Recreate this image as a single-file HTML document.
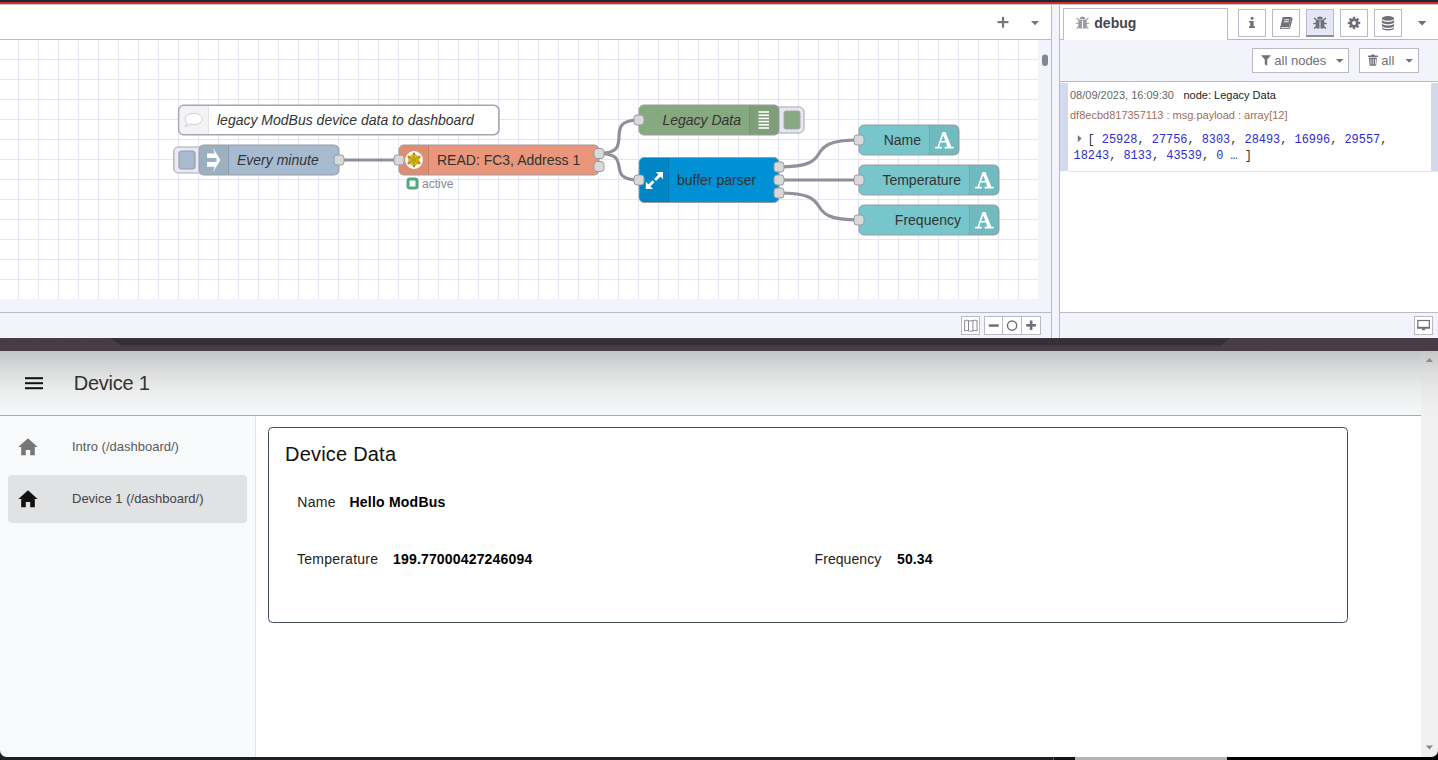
<!DOCTYPE html>
<html><head><meta charset="utf-8">
<style>
*{margin:0;padding:0;box-sizing:border-box}
html,body{width:1438px;height:760px;overflow:hidden;background:#fff;font-family:"Liberation Sans",sans-serif}
.abs{position:absolute}
#hdr1{left:0;top:0;width:1438px;height:2px;background:#1d2636}
#hdr2{left:0;top:2px;width:1438px;height:2px;background:#d42a2a}
#wstabs{left:0;top:4px;width:1051px;height:36px;background:#fff;border-bottom:1px solid #bab9c8}
#chart{left:0;top:40px;width:1051px;height:272px;background:#f3f3fb}
#grid{left:0;top:40px;width:1038px;height:259px;background-color:#fff;
  background-image:linear-gradient(to right,#e5e5f4 1px,transparent 1px),linear-gradient(to bottom,#e5e5f4 1px,transparent 1px);
  background-size:20px 20px;background-position:18px 19px}
#wsborder{left:1051px;top:4px;width:1px;height:334px;background:#bab9c8}
#sep{left:1052px;top:4px;width:7px;height:334px;background:#f3f3fb}
#sbborder{left:1059px;top:4px;width:1px;height:334px;background:#bab9c8}
#wsfoot{left:0;top:312px;width:1051px;height:26px;background:#f3f3fb;border-top:1px solid #bab9c8}
#sidebar{left:1060px;top:4px;width:378px;height:334px;background:#fff}
#sbtabs{left:1060px;top:4px;width:378px;height:36px;background:#fff;border-bottom:1px solid #bab9c8}
#sbtoolbar{left:1060px;top:40px;width:378px;height:42px;background:#f3f3fb;border-bottom:1px solid #bab9c8}
#sbfoot{left:1060px;top:312px;width:378px;height:26px;background:#f3f3fb;border-top:1px solid #bab9c8}
#band{left:0;top:338px;width:1438px;height:13px;background:#483c47}
#dash{left:0;top:351px;width:1438px;height:406px;background:#fff}
#dhead{left:0;top:351px;width:1421px;height:65px;background:linear-gradient(to bottom,#c3c4c6,#dadbdc 30%,#ebecec 60%,#f6f7f8);border-bottom:1px solid #a9a9ab}
#nav{left:0;top:416px;width:256px;height:341px;background:#f8f9fb;border-right:1px solid #e3e3e5}
#dscroll{left:1421px;top:351px;width:17px;height:406px;background:linear-gradient(to bottom,#c6c7c8 0px,#dcdcdd 20px,#e9e9ea 40px,#f0f0f0 62px,#f0f0f0)}
#bottom{left:0;top:757px;width:1438px;height:3px;background:#111}
</style></head><body>
<div class="abs" id="hdr1"></div>
<div class="abs" id="hdr2"></div>
<div class="abs" id="wstabs"></div>
<div class="abs" id="chart"></div>
<div class="abs" id="grid"></div>
<div class="abs" id="wsfoot"></div>
<svg class="abs" style="left:0;top:0" width="1051" height="312" viewBox="0 0 1051 312">
<defs><clipPath id="cc"><rect x="0" y="40" width="1038" height="259"/></clipPath></defs>
<g clip-path="url(#cc)" font-family="Liberation Sans" font-size="14">
<!-- links -->
<g fill="none" stroke="#90909a" stroke-width="3.2">
<path d="M339 160 L399 160"/>
<path d="M599 153.5 C638 153.5 600 120 639 120"/>
<path d="M599 153.5 C635 153.5 603 180 639 180"/>
<path d="M779 167 C842 167 796 140 859 140"/>
<path d="M779 180 L859 180"/>
<path d="M779 193 C842 193 796 220 859 220"/>
</g>
<!-- comment -->
<rect x="178.5" y="105.5" width="320" height="29" rx="5" fill="#fff" stroke="#b4b4bd"/>
<path d="M179 110.5 a5 5 0 0 1 5 -5 h24 v29 h-24 a5 5 0 0 1 -5 -5z" fill="#f3f3f5"/>
<line x1="208.5" y1="106" x2="208.5" y2="134" stroke="#e2e2e6"/>
<rect x="178.6" y="105.3" width="320.4" height="29.4" rx="5" fill="none" stroke="#a6a6b0" stroke-width="1.4"/>
<path d="M193.8 113.3 c-4.8 0 -8.6 2.5 -8.6 5.6 c0 1.4 0.8 2.7 2.2 3.7 l-2.2 3.9 l5.2 -2.6 c1.1 0.4 2.2 0.6 3.4 0.6 c4.8 0 8.6 -2.5 8.6 -5.6 s-3.8 -5.6 -8.6 -5.6z" fill="#fff" stroke="#c9c9cc" stroke-width="0.9"/>
<text x="217" y="124.9" font-style="italic" fill="#333">legacy ModBus device data to dashboard</text>

<!-- inject -->
<rect x="173.8" y="147" width="32" height="26" rx="4.5" fill="#e9e9f7" stroke="#a8a8b2" stroke-width="1.2"/>
<rect x="179" y="151" width="16" height="18" rx="3" fill="#a6bbcf" stroke="#9d9da7" stroke-width="1.2"/>
<rect x="199" y="145" width="140" height="30" rx="5" fill="#a6bbcf" stroke="#9a9aa3"/>
<path d="M204 145.5 h25 v29 h-25 a5 5 0 0 1 -4.5 -4.5 v-20 a5 5 0 0 1 4.5 -4.5z" fill="rgba(0,0,0,0.06)"/>
<line x1="228.5" y1="145.5" x2="228.5" y2="174.5" stroke="rgba(0,0,0,0.1)"/>
<path d="M207 153.4 h9 v4.5 h-9z M207 162.1 h9 v4.7 h-9z M213 147.8 L220.4 160 L213 172.2 L216.8 160z" fill="#fff"/>
<path d="M213 153 v-2" stroke="none"/>
<text x="237" y="164.9" font-style="italic" fill="#333">Every minute</text>
<rect x="334" y="155" width="10" height="10" rx="3" fill="#d9d9d9" stroke="#9a9aa3"/>

<!-- modbus read -->
<rect x="399" y="145" width="200" height="30" rx="5" fill="#e9967a" stroke="#9a9aa3"/>
<path d="M404 145.5 h25 v29 h-25 a5 5 0 0 1 -4.5 -4.5 v-20 a5 5 0 0 1 4.5 -4.5z" fill="rgba(0,0,0,0.05)"/>
<line x1="428.5" y1="145.5" x2="428.5" y2="174.5" stroke="rgba(0,0,0,0.1)"/>
<circle cx="414" cy="160" r="8.9" fill="#fff"/>
<polygon points="414.00,152.80 416.80,155.15 420.24,156.40 419.60,160.00 420.24,163.60 416.80,164.85 414.00,167.20 411.20,164.85 407.76,163.60 408.40,160.00 407.76,156.40 411.20,155.15" fill="#f3b10a"/>
<g stroke="#9ba524" stroke-width="1.3"><line x1="414.00" y1="153.70" x2="414.00" y2="166.30"/><line x1="419.46" y1="156.85" x2="408.54" y2="163.15"/><line x1="419.46" y1="163.15" x2="408.54" y2="156.85"/></g>
<g fill="#8f8a3a"><circle cx="414.00" cy="153.70" r="1.1"/><circle cx="419.46" cy="156.85" r="1.1"/><circle cx="419.46" cy="163.15" r="1.1"/><circle cx="414.00" cy="166.30" r="1.1"/><circle cx="408.54" cy="163.15" r="1.1"/><circle cx="408.54" cy="156.85" r="1.1"/></g>
<text x="437" y="164.9" fill="#333">READ: FC3, Address 1</text>
<rect x="394" y="155" width="10" height="10" rx="3" fill="#d9d9d9" stroke="#9a9aa3"/>
<rect x="594" y="148.5" width="10" height="10" rx="3" fill="#d9d9d9" stroke="#9a9aa3"/>
<rect x="594" y="161.5" width="10" height="10" rx="3" fill="#d9d9d9" stroke="#9a9aa3"/>
<rect x="408" y="179" width="9" height="9" rx="2" fill="#fff" stroke="#5aa47e" stroke-width="3"/>
<text x="422" y="188" font-size="12" fill="#8a8a90">active</text>

<!-- debug -->
<rect x="772" y="107" width="32" height="26" rx="5" fill="#e8e8f4" stroke="#a3a3ad"/>
<rect x="784" y="111" width="16" height="18" rx="2" fill="#87a980" stroke="#a3a3ad"/>
<rect x="639" y="105" width="140" height="30" rx="5" fill="#87a980" stroke="#9a9aa3"/>
<path d="M749.5 105.5 h25 a5 5 0 0 1 4.5 4.5 v20 a5 5 0 0 1 -4.5 4.5 h-25z" fill="rgba(0,0,0,0.06)"/>
<line x1="749.5" y1="105.5" x2="749.5" y2="134.5" stroke="rgba(0,0,0,0.1)"/>
<g stroke="#fff" stroke-width="1.6">
<line x1="758.5" y1="112" x2="769" y2="112"/>
<line x1="758.5" y1="115.2" x2="769" y2="115.2"/>
<line x1="758.5" y1="118.4" x2="769" y2="118.4"/>
<line x1="758.5" y1="121.6" x2="769" y2="121.6"/>
<line x1="758.5" y1="124.8" x2="769" y2="124.8"/>
<line x1="758.5" y1="128" x2="769" y2="128"/>
</g>
<text x="741" y="124.9" text-anchor="end" font-style="italic" fill="#333">Legacy Data</text>
<rect x="634" y="115" width="10" height="10" rx="3" fill="#d9d9d9" stroke="#9a9aa3"/>

<!-- buffer parser -->
<rect x="639" y="157.5" width="140" height="45" rx="5" fill="#0090d4" stroke="#9a9aa3"/>
<path d="M644 158 h25 v44 h-25 a5 5 0 0 1 -4.5 -4.5 v-35 a5 5 0 0 1 4.5 -4.5z" fill="rgba(0,0,0,0.07)"/>
<line x1="668.5" y1="158" x2="668.5" y2="202" stroke="rgba(0,0,0,0.12)"/>
<g fill="#fff">
<path d="M655.8 172 L663 172 L663 179.2z M645.8 181.8 L645.8 189 L653 189z"/></g><g stroke="#fff" stroke-width="2.9"><line x1="660.8" y1="174.2" x2="655" y2="180"/><line x1="648" y1="186.8" x2="653.5" y2="181.3"/>
</g>
<text x="677" y="184.9" fill="#333">buffer parser</text>
<rect x="634" y="175" width="10" height="10" rx="3" fill="#d9d9d9" stroke="#9a9aa3"/>
<rect x="774" y="162" width="10" height="10" rx="3" fill="#d9d9d9" stroke="#9a9aa3"/>
<rect x="774" y="175" width="10" height="10" rx="3" fill="#d9d9d9" stroke="#9a9aa3"/>
<rect x="774" y="188" width="10" height="10" rx="3" fill="#d9d9d9" stroke="#9a9aa3"/>

<!-- ui text nodes -->
<rect x="859" y="125" width="100" height="30" rx="5" fill="#77c6cc" stroke="#9a9aa3"/>
<path d="M929.5 125.5 h25 a5 5 0 0 1 4.5 4.5 v20 a5 5 0 0 1 -4.5 4.5 h-25z" fill="rgba(0,0,0,0.06)"/>
<line x1="929.5" y1="125.5" x2="929.5" y2="154.5" stroke="rgba(0,0,0,0.1)"/>
<path fill="#fff" fill-rule="evenodd" d="M942.5 131.9 L945.5 131.9 L951.3 146.8 L953.6 146.8 L953.6 148.5 L944.6 148.5 L944.6 146.8 L947.3 146.8 L945.9 142.6 L940.5 142.6 L939.2 146.8 L941.8 146.8 L941.8 148.5 L935.2 148.5 L935.2 146.8 L937.5 146.8z M943.3 135.6 L945.4 141.1 L941.1 141.1z"/>
<text x="921" y="144.9" text-anchor="end" fill="#333">Name</text>
<rect x="854" y="135" width="10" height="10" rx="3" fill="#d9d9d9" stroke="#9a9aa3"/>

<rect x="859" y="165" width="140" height="30" rx="5" fill="#77c6cc" stroke="#9a9aa3"/>
<path d="M969.5 165.5 h25 a5 5 0 0 1 4.5 4.5 v20 a5 5 0 0 1 -4.5 4.5 h-25z" fill="rgba(0,0,0,0.06)"/>
<line x1="969.5" y1="165.5" x2="969.5" y2="194.5" stroke="rgba(0,0,0,0.1)"/>
<path fill="#fff" fill-rule="evenodd" d="M982.5 171.9 L985.5 171.9 L991.3 186.8 L993.6 186.8 L993.6 188.5 L984.6 188.5 L984.6 186.8 L987.3 186.8 L985.9 182.6 L980.5 182.6 L979.2 186.8 L981.8 186.8 L981.8 188.5 L975.2 188.5 L975.2 186.8 L977.5 186.8z M983.3 175.6 L985.4 181.1 L981.1 181.1z"/>
<text x="961" y="184.9" text-anchor="end" fill="#333">Temperature</text>
<rect x="854" y="175" width="10" height="10" rx="3" fill="#d9d9d9" stroke="#9a9aa3"/>

<rect x="859" y="205" width="140" height="30" rx="5" fill="#77c6cc" stroke="#9a9aa3"/>
<path d="M969.5 205.5 h25 a5 5 0 0 1 4.5 4.5 v20 a5 5 0 0 1 -4.5 4.5 h-25z" fill="rgba(0,0,0,0.06)"/>
<line x1="969.5" y1="205.5" x2="969.5" y2="234.5" stroke="rgba(0,0,0,0.1)"/>
<path fill="#fff" fill-rule="evenodd" d="M982.5 211.9 L985.5 211.9 L991.3 226.8 L993.6 226.8 L993.6 228.5 L984.6 228.5 L984.6 226.8 L987.3 226.8 L985.9 222.6 L980.5 222.6 L979.2 226.8 L981.8 226.8 L981.8 228.5 L975.2 228.5 L975.2 226.8 L977.5 226.8z M983.3 215.6 L985.4 221.1 L981.1 221.1z"/>
<text x="961" y="224.9" text-anchor="end" fill="#333">Frequency</text>
<rect x="854" y="215" width="10" height="10" rx="3" fill="#d9d9d9" stroke="#9a9aa3"/>
</g>
<!-- vertical scrollbar thumb -->
<rect x="1042" y="54.5" width="6" height="11.5" rx="3" fill="#85858f"/>
<!-- toolbar + and caret -->
<g fill="#777780">
<rect x="997.5" y="21" width="11" height="2.2"/>
<rect x="1001.9" y="16.8" width="2.2" height="11"/>
<path d="M1031 21 h8 l-4 4.3z"/>
</g>

</svg>

<svg class="abs" style="left:940px;top:312px" width="111" height="26" viewBox="940 312 111 26">
<g fill="#fff" stroke="#bab9c8">
<rect x="961.5" y="316.5" width="18" height="18"/>
<rect x="984.5" y="316.5" width="56" height="18"/>
</g>
<g stroke="#bab9c8"><line x1="1002.5" y1="317" x2="1002.5" y2="334"/><line x1="1021.5" y1="317" x2="1021.5" y2="334"/></g>
<path d="M964.6 320.6 q1.8 -0.8 3.9 0 q2.2 0.9 4.4 0 q1.9 -0.8 4.1 -0.1 v10.3 q-2.2 -0.7 -4.1 0.1 q-2.2 0.9 -4.4 0 q-2.1 -0.8 -3.9 0z M968.5 320.6 v10.3 M972.9 320.6 v10.3" fill="none" stroke="#7a7a84" stroke-width="0.9"/>
<rect x="988.8" y="324.3" width="9.9" height="2.5" fill="#6f6f79"/>
<circle cx="1012.1" cy="325.6" r="4.6" fill="none" stroke="#6f6f79" stroke-width="1.4"/>
<rect x="1026.2" y="324" width="9.8" height="2.6" fill="#6f6f79"/>
<rect x="1029.8" y="320.5" width="2.6" height="9.5" fill="#6f6f79"/>
</svg>
<div class="abs" id="wsborder"></div>
<div class="abs" id="sep"></div>
<div class="abs" id="sbborder"></div>
<div class="abs" id="sidebar"></div>
<div class="abs" id="sbtabs"></div>
<div class="abs" id="sbtoolbar"></div>
<div class="abs" id="sbfoot"></div>
<svg class="abs" style="left:1060px;top:0" width="378" height="338" viewBox="1060 0 378 338" font-family="Liberation Sans">
<!-- tab -->
<path d="M1063.5 40 V8.5 H1227.5 V40" fill="#fff" stroke="#bab9c8"/>
<g fill="#9a9ca8">
<path d="M1079.6 19.3 a2.9 2.9 0 0 1 5.8 0z"/>
<rect x="1078.3" y="19.8" width="8.4" height="8.6" rx="1.5"/>
</g>
<line x1="1082.5" y1="20.5" x2="1082.5" y2="28.6" stroke="#fff" stroke-width="1"/>
<g stroke="#9a9ca8" stroke-width="1.1" stroke-linecap="round">
<line x1="1076.3" y1="23.5" x2="1078.5" y2="23.5"/><line x1="1086.5" y1="23.5" x2="1088.7" y2="23.5"/>
<line x1="1076.9" y1="18.3" x2="1078.9" y2="20"/><line x1="1088.1" y1="18.3" x2="1086.1" y2="20"/>
<line x1="1077" y1="28.3" x2="1078.9" y2="26.2"/><line x1="1088" y1="28.3" x2="1086.1" y2="26.2"/>
</g>
<text x="1094.3" y="27.8" font-size="14" font-weight="bold" fill="#3f4753">debug</text>
<!-- buttons -->
<g fill="#fff" stroke="#bab9c8">
<rect x="1238.5" y="9.5" width="27" height="27"/>
<rect x="1272.5" y="9.5" width="27" height="27"/>
<rect x="1306.5" y="9.5" width="27" height="27" fill="#e6e7f6"/>
<rect x="1340.5" y="9.5" width="27" height="27"/>
<rect x="1374.5" y="9.5" width="27" height="27"/>
</g>
<rect x="1306" y="35" width="28" height="2" fill="#8e8e98"/>
<g fill="#6f6f79">
<!-- info -->
<circle cx="1252.1" cy="18.2" r="1.5"/>
<path d="M1249 20.9 h4.6 v5.3 h1.3 v1.7 h-5.9 v-1.7 h1.3 v-3.6 h-1.3z"/>
<!-- book -->
<path d="M1282.7 16.9 H1291.3 L1289.1 26.9 H1280.4z"/>
<path d="M1280.1 26.6 H1289.2 L1288.9 28.9 H1279.9z"/>
<path d="M1291.3 17 L1292.6 18.4 L1290.2 28.3 L1289 28.9z"/>
<!-- bug -->
<path d="M1317.1 19.3 a2.9 2.9 0 0 1 5.8 0z"/>
<rect x="1315.8" y="19.8" width="8.4" height="8.6" rx="1.5"/>
<!-- cog -->
<circle cx="1354" cy="23" r="4.5"/>
<rect x="1352.8" y="16.8" width="2.4" height="12.4"/>
<rect x="1347.8" y="21.8" width="12.4" height="2.4"/>
<rect x="1352.8" y="16.8" width="2.4" height="12.4" transform="rotate(45 1354 23)"/>
<rect x="1352.8" y="16.8" width="2.4" height="12.4" transform="rotate(-45 1354 23)"/>
<!-- db -->
<ellipse cx="1388" cy="18.4" rx="6.1" ry="2.3"/>
<path d="M1381.9 19.6 v2.4 a6.1 2.3 0 0 0 12.2 0 v-2.4 a6.1 2.3 0 0 1 -12.2 0z"/>
<path d="M1381.9 23.2 v2.4 a6.1 2.3 0 0 0 12.2 0 v-2.4 a6.1 2.3 0 0 1 -12.2 0z"/>
<path d="M1381.9 26.8 v1.3 a6.1 2.3 0 0 0 12.2 0 v-1.3 a6.1 2.3 0 0 1 -12.2 0z"/>
<!-- caret -->
<path d="M1417.8 21 h8.6 l-4.3 4.5z"/>
</g>
<path d="M1284.3 19.8 h5 M1283.8 21.8 h5 M1280.8 27.7 h7.9" stroke="#fff" stroke-width="0.95"/>
<circle cx="1354" cy="23" r="1.9" fill="#fff"/>
<line x1="1320" y1="20.5" x2="1320" y2="28.6" stroke="#e6e7f6" stroke-width="1"/>
<g stroke="#6f6f79" stroke-width="1.3" stroke-linecap="round">
<line x1="1313.8" y1="23.5" x2="1316" y2="23.5"/><line x1="1324" y1="23.5" x2="1326.2" y2="23.5"/>
<line x1="1314.4" y1="18.3" x2="1316.4" y2="20"/><line x1="1325.6" y1="18.3" x2="1323.6" y2="20"/>
<line x1="1314.5" y1="28.3" x2="1316.4" y2="26.2"/><line x1="1325.5" y1="28.3" x2="1323.6" y2="26.2"/>
</g>
<!-- toolbar buttons -->
<g fill="#fff" stroke="#bab9c8">
<rect x="1252.5" y="48.5" width="96" height="24"/>
<rect x="1359.5" y="48.5" width="59" height="24"/>
</g>
<g fill="#6f6f79">
<path d="M1261 55.2 h10 l-3.8 4.4 v6.2 l-2.4 -1.6 v-4.6z"/>
<path d="M1336 59 h7.4 l-3.7 3.8z"/>
<rect x="1368" y="55.6" width="9.8" height="1.5"/>
<rect x="1371" y="54.6" width="3.8" height="1.5"/>
<path d="M1369 57.8 h7.8 l-0.6 8 h-6.6z"/>
<path d="M1405.5 59 h7.4 l-3.7 3.8z"/>
</g>
<path d="M1371.6 59 v5.5 M1373.9 59 v5.5 M1376.1 59 v5.5" stroke="#fff" stroke-width="0.8" transform="translate(-0.6 0)"/>
<text x="1274.3" y="65" font-size="13" fill="#6f6f79">all nodes</text>
<text x="1381.3" y="65" font-size="13" fill="#6f6f79">all</text>
<!-- message -->
<rect x="1060" y="83" width="8" height="88" fill="#d3d9ec"/>
<rect x="1431" y="83" width="7" height="88" fill="#d3d9ec"/>
<line x1="1068" y1="171.5" x2="1438" y2="171.5" stroke="#e4e4ee"/>
<text x="1070" y="98.9" font-size="11" fill="#666">08/09/2023, 16:09:30</text>
<text x="1183.5" y="98.9" font-size="11" fill="#222">node: Legacy Data</text>
<text x="1070" y="118.6" font-size="11" fill="#a06e5a">df8ecbd817357113 : msg.payload : array[12]</text>
<path d="M1077.8 135 l3.8 3.6 l-3.8 3.6z" fill="#777"/>
<text font-family="Liberation Mono" font-size="11.9" fill="#2b2bd4" xml:space="preserve"><tspan x="1087.5" y="142.7"><tspan fill="#333">[</tspan> 25928<tspan fill="#333">,</tspan> 27756<tspan fill="#333">,</tspan> 8303<tspan fill="#333">,</tspan> 28493<tspan fill="#333">,</tspan> 16996<tspan fill="#333">,</tspan> 29557<tspan fill="#333">,</tspan></tspan><tspan x="1073.5" y="159.4">18243<tspan fill="#333">,</tspan> 8133<tspan fill="#333">,</tspan> 43539<tspan fill="#333">,</tspan> 0 <tspan fill="#333">… ]</tspan></tspan></text>
<!-- footer monitor -->
<rect x="1414.5" y="316.5" width="18" height="18" fill="#fff" stroke="#bab9c8"/>
<rect x="1417.8" y="320.5" width="11.6" height="7.5" fill="none" stroke="#6f6f79" stroke-width="1.2"/>
<rect x="1417.2" y="326.8" width="12.8" height="1.6" fill="#6f6f79"/>
<rect x="1422" y="328.4" width="3.2" height="1.8" fill="#6f6f79"/>
</svg>

<div class="abs" style="left:0;top:4px;width:1438px;height:1px;background:#c3c9d2"></div>
<div class="abs" id="band"></div>
<svg class="abs" style="left:0;top:338px" width="1438" height="13" viewBox="0 338 1438 13">
<polygon points="111,338.4 1229.8,338.4 1220.6,345.6 121.2,345.6" fill="#372e36"/>
<line x1="1" y1="341.5" x2="110" y2="341.5" stroke="#3a3039" stroke-width="1" stroke-dasharray="1 2"/>
</svg>
<div class="abs" id="dash"></div>
<div class="abs" id="dhead"></div>
<div class="abs" id="nav"></div>
<div class="abs" id="dscroll"></div>

<svg class="abs" style="left:0;top:338px" width="1438" height="422" viewBox="0 338 1438 422">
<g fill="#111">
<rect x="25" y="377.2" width="18" height="2"/>
<rect x="25" y="382.2" width="18" height="2"/>
<rect x="25" y="387.2" width="18" height="2"/>
</g>
<text x="73.8" y="390" font-size="20" fill="#333" font-family="Liberation Sans" textLength="76" lengthAdjust="spacing">Device 1</text>
<!-- nav -->
<rect x="8" y="475" width="239" height="48" rx="4" fill="#e1e2e3"/>
<path d="M28 438.3 l-9.6 8.6 h2.8 v8.4 h4.6 v-5.4 h4.4 v5.4 h4.6 v-8.4 h2.8z" fill="#767676"/>
<path d="M28 490.3 l-9.6 8.6 h2.8 v8.4 h4.6 v-5.4 h4.4 v5.4 h4.6 v-8.4 h2.8z" fill="#111"/>
<text x="72" y="450.6" font-size="13" fill="#5a5a5a" font-family="Liberation Sans">Intro (/dashboard/)</text>
<text x="72" y="502.7" font-size="13" fill="#444" font-family="Liberation Sans">Device 1 (/dashboard/)</text>
<!-- card -->
<rect x="268.5" y="427.5" width="1079" height="195" rx="4" fill="#fff" stroke="#434d5c"/>
<text x="285" y="461" font-size="20" fill="#111" font-family="Liberation Sans" textLength="111" lengthAdjust="spacing">Device Data</text>
<g font-family="Liberation Sans" font-size="14" fill="#222">
<text x="297.3" y="506.7" textLength="38.3" lengthAdjust="spacing">Name</text>
<text x="297" y="563.8" textLength="81" lengthAdjust="spacing">Temperature</text>
<text x="814.5" y="563.8" textLength="66.8" lengthAdjust="spacing">Frequency</text>
</g>
<g font-family="Liberation Sans" font-size="14" font-weight="bold" fill="#000">
<text x="349.5" y="506.7" textLength="95.8" lengthAdjust="spacing">Hello ModBus</text>
<text x="393" y="563.8" textLength="139.2" lengthAdjust="spacing">199.77000427246094</text>
<text x="897" y="563.8" textLength="35.5" lengthAdjust="spacing">50.34</text>
</g>
<!-- scroll arrows -->
<path d="M1425.8 362 h7.2 l-3.6 -4z" fill="#8a8a8a"/>
<path d="M1425.8 745.6 h7.2 l-3.6 4z" fill="#8a8a8a"/>
</svg>
<div class="abs" id="bottom"></div>
<svg class="abs" style="left:0;top:745px" width="1438" height="15" viewBox="0 745 1438 15">
<path d="M0 750.5 A6.5 6.5 0 0 0 6.5 757 L0 757Z" fill="#1d1e22"/>
<path d="M1438 750.5 A6.5 6.5 0 0 1 1431.5 757 L1438 757Z" fill="#000"/>
<rect x="0" y="757" width="1053" height="3" fill="#1e1f23"/>
<rect x="1053" y="757" width="1" height="3" fill="#5a5f58"/>
<rect x="1054" y="757" width="21" height="3" fill="#111317"/>
<rect x="1075" y="757" width="152" height="3" fill="#b4b4b6"/>
<rect x="1227" y="757" width="211" height="3" fill="#000"/>
</svg>
</body></html>
